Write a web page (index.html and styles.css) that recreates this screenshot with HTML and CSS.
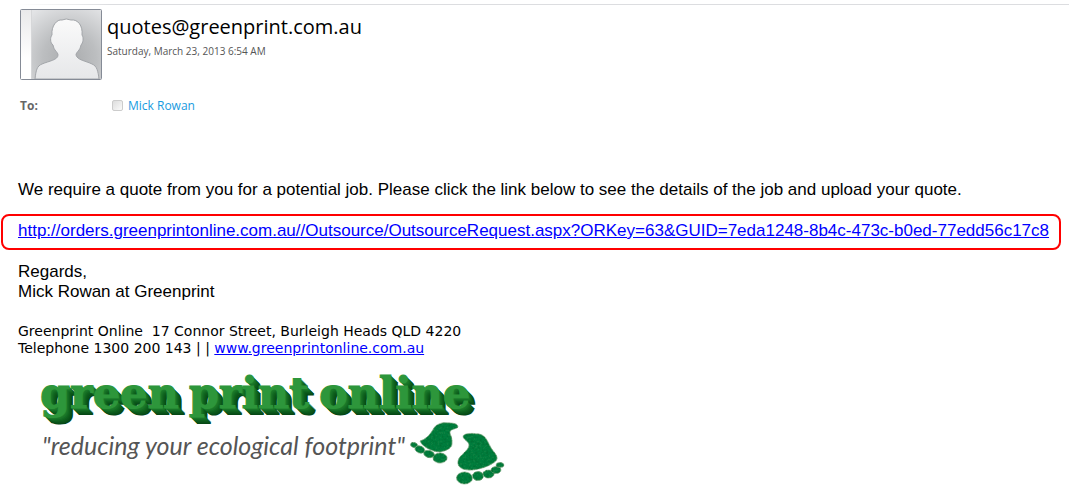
FILE: index.html
```html
<!DOCTYPE html>
<html lang="en">
<head>
<meta charset="utf-8">
<title>quotes@greenprint.com.au</title>
<link rel="stylesheet" href="styles.css">
</head>
<body>
<article class="message">
  <header class="message-header">
    <div class="sender">
      <svg class="avatar" viewBox="0 0 82 71" role="img" aria-label="Sender picture">
        <defs>
          <radialGradient id="backdrop" cx=".55" cy=".7" r=".85">
            <stop offset="0" stop-color="#a9abad"/><stop offset=".45" stop-color="#bcbec0"/><stop offset="1" stop-color="#e3e4e6"/>
          </radialGradient>
          <linearGradient id="person" x1="0" y1="0" x2="0" y2="1">
            <stop offset="0" stop-color="#fafafa"/><stop offset="1" stop-color="#e6e7e9"/>
          </linearGradient>
          <linearGradient id="strip" x1="0" y1="0" x2="0" y2="1">
            <stop offset="0" stop-color="#e9e9ea"/><stop offset=".7" stop-color="#fff"/>
          </linearGradient>
        </defs>
        <rect x=".5" y=".5" width="81" height="70" rx="1" fill="url(#strip)"/>
        <rect x="11" y="1" width="70" height="69" fill="url(#backdrop)"/>
        <path d="M11.500 1V70" stroke="#d6d7d9"/>
        <path d="M15 70C16 61 17 57 22 55C29 52 38 51 38 46C38 43 34 42 33 36C30 34 30 28 32 26C31 17 37 10 42 11Q46 9 51 11C58 10 63 17 62 26C64 29 63 34 61 36C60 42 56 43 56 46C57 51 66 52 72 55C77 57 78 62 79 70Z" fill="url(#person)" stroke="#a3a6aa"/>
        <rect x=".5" y=".5" width="81" height="70" rx="1" fill="none" stroke="#858b96"/>
      </svg>
      <div class="sender-text">
        <h1 class="address">quotes@greenprint.com.au</h1>
        <time class="date" datetime="2013-03-23T06:54">Saturday, March 23, 2013 6:54 AM</time>
      </div>
    </div>
    <div class="recipient">
      <span class="to">To:</span>
      <input class="pick" id="mick" type="checkbox">
      <label class="name" for="mick">Mick Rowan</label>
    </div>
  </header>
  <div class="body">
    <p class="intro">We require a quote from you for a potential job. Please click the link below to see the details of the job and upload your quote.</p>
    <p class="highlight"><a href="#request">http://orders.greenprintonline.com.au//Outsource/OutsourceRequest.aspx?ORKey=63&amp;GUID=7eda1248-8b4c-473c-b0ed-77edd56c17c8</a></p>
    <p class="closing">Regards,<br>Mick Rowan at Greenprint</p>
    <p class="signature">Greenprint Online&nbsp; 17 Connor Street, Burleigh Heads QLD 4220<br>Telephone 1300 200 143 | | <a href="#site">www.greenprintonline.com.au</a></p>
    <div class="logo">
      <div class="wordmark"><span>green</span><span>print</span><span>online</span></div>
      <div class="tagline-row">
        <span class="tagline">"reducing your ecological footprint"</span>
        <svg class="feet" viewBox="0 0 96 64" aria-hidden="true">
          <defs>
            <filter id="grass" x="-5%" y="-5%" width="110%" height="110%">
              <feTurbulence type="fractalNoise" baseFrequency=".45" numOctaves="2" seed="4" result="n"/>
              <feColorMatrix in="n" values="0 0 0 0 0  0 0 0 0 .15  0 0 0 0 .03  1.800 0 0 0 -.65" result="d"/>
              <feComposite in="d" in2="SourceGraphic" operator="in" result="t"/>
              <feMerge><feMergeNode in="SourceGraphic"/><feMergeNode in="t"/></feMerge>
            </filter>
          </defs>
          <g fill="#118040" stroke="#8db58e" stroke-width=".6" filter="url(#grass)">
            <path d="M11 20C18 18 22 12 25 7C28 2 35 1 41 2C45 2 49 3 49 6C48 8 41 8 41 11C41 14 44 18 43 23C43 27 37 30 31 31C24 31 13 26 11 20Z"/>
            <ellipse cx="5" cy="24" rx="3.500" ry="2.500" transform="rotate(15 5 24)"/>
            <ellipse cx="11" cy="28.500" rx="5" ry="3.500" transform="rotate(20 11 28)"/>
            <ellipse cx="20" cy="33" rx="5.500" ry="3.500" transform="rotate(15 20 33)"/>
            <ellipse cx="31" cy="37" rx="7" ry="5"/>
            <path d="M54 15C55 12 64 12 70 13C76 14 78 19 81 25C84 31 89 34 88 38C86 43 72 49 61 49C53 49 48 46 49 40C50 34 60 30 60 24C60 20 54 19 54 15Z"/>
            <ellipse cx="55.500" cy="57" rx="8" ry="6"/>
            <ellipse cx="69" cy="55" rx="5.500" ry="4.500"/>
            <ellipse cx="79.500" cy="53" rx="5.500" ry="4"/>
            <ellipse cx="87" cy="49" rx="5" ry="3.500"/>
            <ellipse cx="91" cy="44" rx="4" ry="2.500"/>
          </g>
        </svg>
      </div>
    </div>
  </div>
</article>
</body>
</html>
```
FILE: styles.css
```css
body { margin: 0; background: #fff; color: #000; font-family: "Liberation Sans", Arial, sans-serif; }
p, h1 { margin: 0; }
a { color: #00f; }
.message { padding-top: 4px; }
.message-header {
  padding: 5px 20px 0;
  font-family: "Open Sans", "Noto Sans", sans-serif;
  background: linear-gradient(to right, transparent 20px, #dcdde0 110px) top / 100% 1px no-repeat;
}
.sender { display: flex; gap: 5px; }
.avatar { width: 82px; height: 71px; flex: none; }
.sender-text { display: flex; flex-direction: column; }
.address { font-size: 20px; line-height: 35px; font-weight: 400; }
.date { font-size: 10px; line-height: 14px; color: #555; }
.recipient { display: flex; align-items: center; margin-top: 16px; height: 18px; font-size: 12px; }
.to { width: 92px; font-weight: 700; color: #666; }
.pick {
  appearance: none; width: 11px; height: 11px; margin: 0 5px 0 0;
  border: 1px solid #ccc; border-radius: 2px; background: linear-gradient(135deg, #ddd, #fafafa);
}
.name { color: #179be0; }
.body { padding-top: 66px; font-size: 17px; line-height: 20px; }
.intro, .closing, .signature { padding: 0 18px; }
.highlight { margin: 14px 8px 12px 1px; padding: 5px 0 7px 15px; border: 2px solid #f00; border-radius: 8px; }
.signature { margin-top: 21px; font-family: "DejaVu Sans", Verdana, sans-serif; font-size: 14px; line-height: 17px; }
.logo { padding: 15px 40px 0; }
.wordmark {
  display: flex; gap: 10px;
  font-family: "DejaVu Serif", serif; font-size: 43px; line-height: 42px; font-weight: 700;
  color: #2d963b;
  -webkit-text-stroke: 1px #2d963b;
  text-shadow: 1px 1px #1d7d2c, 2px 2px #187528, 3px 3px #126b23, 4px 4px #0e611e, 5px 5px #0b581b, 6px 6px #085018, 7px 7px #064815;
}
.tagline-row { display: flex; align-items: flex-start; gap: 4px; padding-top: 7px; }
.tagline { padding: 9px 0 0 2px; color: #555; font-family: Lato, sans-serif; font-style: italic; font-size: 25px; line-height: 30px; }
.feet { width: 96px; height: 64px; flex: none; }
```
